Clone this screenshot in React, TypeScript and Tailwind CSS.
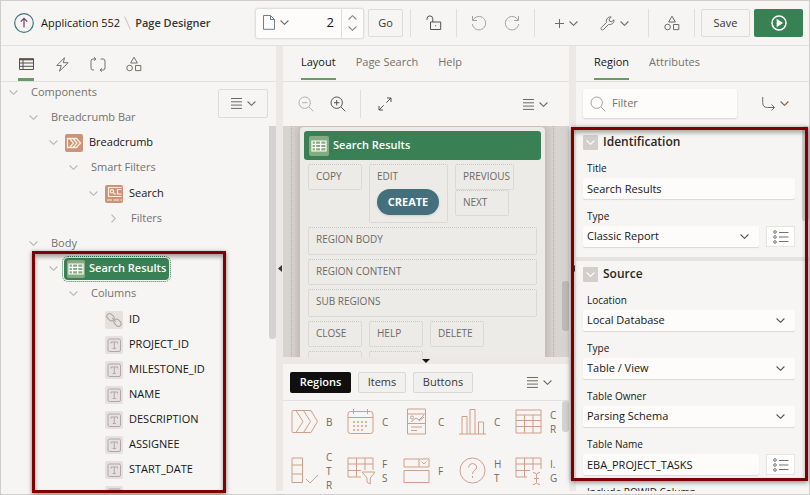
import { useState, type ReactNode } from "react";

type IconProps = { className?: string };

function Svg({
  className = "",
  box = "0 0 16 16",
  width = 1,
  children,
}: {
  className?: string;
  box?: string;
  width?: number;
  children: ReactNode;
}) {
  return (
    <svg
      className={`shrink-0 ${className}`}
      viewBox={box}
      fill="none"
      stroke="currentColor"
      strokeWidth={width}
      aria-hidden="true"
    >
      {children}
    </svg>
  );
}

const Chevron = ({ className = "" }: IconProps) => (
  <Svg className={`h-[5px] w-[9px] ${className}`} box="0 0 9 5" width={1.1}>
    <path d="M.6.5 4.5 4.3 8.4.5" />
  </Svg>
);

const Lines = () => (
  <Svg className="h-[11px] w-[11px]" box="0 0 11 11">
    <path d="M0 .5h11M0 3.8h11M0 7.1h11M0 10.4h11" />
  </Svg>
);

const Shapes = ({ className = "" }: IconProps) => (
  <Svg className={`h-4 w-4 ${className}`}>
    <path d="M8 1.2 11.4 7H4.6z" />
    <circle cx="3.6" cy="12" r="2.8" />
    <path d="M9.5 9.5h5.3v5.1H9.5z" />
  </Svg>
);

const Magnifier = ({ className = "", sign = "" }: IconProps & { sign?: string }) => (
  <Svg className={`h-4 w-4 ${className}`}>
    <circle cx="6.7" cy="6.7" r="5.7" />
    <path d="m11 11 4.3 4.3" />
    {sign && <path d={sign} />}
  </Svg>
);

const Grid = ({ className = "" }: IconProps) => (
  <Svg className={className} box="0 0 18 18" width={1.2}>
    <path d="M2 4h14v10H2zM2 7.3h14M2 10.6h14M5.5 4v10M10.7 4v10" />
  </Svg>
);

const ListIcon = () => (
  <Svg className="h-[14px] w-[16px]" box="0 0 16 14">
    <circle cx="2" cy="2" r="1.3" />
    <circle cx="2" cy="7" r="1.3" />
    <circle cx="2" cy="12" r="1.3" />
    <path d="M6 2.5h9.500M6 7h9.500M6 11.500h9.500" />
  </Svg>
);

function TreeIcon({ kind }: { kind: string }) {
  if (kind === "crumb")
    return (
      <span className="size-[18px] shrink-0 rounded-[2px] bg-[#cb9478] text-[#fbeedd]">
        <Svg box="0 0 18 18" width={1.3}>
          <path d="M2.500 4.500h9l4 4.500-4 4.500h-9zM4.500 4.500 8.500 9l-4 4.500M8 4.500 12 9l-4 4.500" />
        </Svg>
      </span>
    );
  if (kind === "search")
    return (
      <span className="size-[18px] shrink-0 rounded-[2px] bg-[#cb9478] text-[#fbeedd]">
        <Svg box="0 0 18 18" width={1.2}>
          <path d="M16.500 2.500h-13v9h13M2 15h5M8.500 15H14M15.500 15H17M16.500 4.500h-4v4.500h4M8.500 7.800l2 1.700" />
          <circle cx="7" cy="6.300" r="1.700" />
        </Svg>
      </span>
    );
  if (kind === "table")
    return (
      <span className="size-[18px] shrink-0 rounded-[2px] bg-[#85ab81] text-white">
        <Grid />
      </span>
    );
  if (kind === "link")
    return (
      <span className="size-[18px] shrink-0 rounded-[2px] bg-[#e4e1de] text-[#a9a5a2]">
        <Svg box="0 0 18 18">
          <rect x="1.500" y="3.500" width="8" height="5.400" rx="2.700" transform="rotate(45 5.500 6.200)" />
          <rect x="8.500" y="9" width="8" height="5.400" rx="2.700" transform="rotate(45 12.500 11.700)" />
          <path d="m7 7 4 4" />
        </Svg>
      </span>
    );
  return (
    <span className="size-[18px] shrink-0 rounded-[2px] bg-[#e4e1de] text-[#b3a5b0]">
      <Svg box="0 0 18 18">
        <rect x="3" y="3" width="12.500" height="12.500" rx="1.500" />
        <path d="M6 7.500v-1.500h6.500v1.500M9.250 6v6.500M7.700 12.500h3.200" />
      </Svg>
    </span>
  );
}

type Item = {
  label: string;
  icon?: string;
  state?: "open" | "closed";
  selected?: boolean;
  children?: Item[];
};

const column = (label: string): Item => ({ label, icon: "text" });

const tree: Item[] = [
  {
    label: "Components",
    state: "open",
    children: [
      {
        label: "Breadcrumb Bar",
        state: "open",
        children: [
          {
            label: "Breadcrumb",
            icon: "crumb",
            state: "open",
            children: [
              {
                label: "Smart Filters",
                state: "open",
                children: [
                  {
                    label: "Search",
                    icon: "search",
                    state: "open",
                    children: [{ label: "Filters", state: "closed" }],
                  },
                ],
              },
            ],
          },
        ],
      },
      {
        label: "Body",
        state: "open",
        children: [
          {
            label: "Search Results",
            icon: "table",
            state: "open",
            selected: true,
            children: [
              {
                label: "Columns",
                state: "open",
                children: [
                  { label: "ID", icon: "link" },
                  column("PROJECT_ID"),
                  column("MILESTONE_ID"),
                  column("NAME"),
                  column("DESCRIPTION"),
                  column("ASSIGNEE"),
                  column("START_DATE"),
                  column("END_DATE"),
                ],
              },
            ],
          },
        ],
      },
    ],
  },
];

function TreeList({ items, level = 0 }: { items: Item[]; level?: number }) {
  const indent = level === 0 ? "" : level === 4 ? "pl-5 pt-px" : "pl-5";
  return (
    <ul className={indent}>
      {items.map((item) => (
        <li key={item.label}>
          <div className="flex h-[25px] items-center whitespace-nowrap">
            <span className="flex w-6 shrink-0 justify-center pl-px text-[#b9b5b2]">
              {item.state && <Chevron className={item.state === "closed" ? "-rotate-90" : ""} />}
            </span>
            {item.selected ? (
              <span className="-ml-px flex h-[22px] items-center gap-1 rounded-[4px] bg-[#398055] px-[3px] font-semibold text-white outline-1 outline-offset-1 outline-[#398055] outline-dotted">
                <TreeIcon kind="table" />
                {item.label}
              </span>
            ) : item.icon ? (
              <span className="flex items-center gap-[6px] text-[#161513]">
                <TreeIcon kind={item.icon} />
                {item.label}
              </span>
            ) : (
              <span className="pl-[6px] text-[#75716d]">{item.label}</span>
            )}
          </div>
          {item.children && <TreeList items={item.children} level={level + 1} />}
        </li>
      ))}
    </ul>
  );
}

const Rule = () => <span className="h-7 w-px bg-[#e0dedb]" />;

function IconButton({
  label,
  className = "",
  children,
}: {
  label: string;
  className?: string;
  children: ReactNode;
}) {
  return (
    <button
      type="button"
      aria-label={label}
      className={`flex h-7 shrink-0 items-center justify-center gap-[5px] ${className}`}
    >
      {children}
    </button>
  );
}

function Header() {
  return (
    <header className="flex h-[45px] shrink-0 items-center border-b border-[#e3e1df] pr-[6px] pl-[13px]">
      <nav aria-label="Breadcrumb" className="flex flex-1 items-center whitespace-nowrap">
        <Svg className="size-5 text-[#3f7480]" box="0 0 20 20" width={1.2}>
          <circle cx="10" cy="10" r="9.300" />
          <path stroke="#7a3b74" d="M10 14.500v-9M6.800 8.600 10 5.400l3.200 3.200" />
        </Svg>
        <a href="#app" className="ml-[7px]">
          Application 552
        </a>
        <Svg className="mx-1 h-[14px] w-[7px] text-[#c5c2bf]" box="0 0 7 14">
          <path d="m.7.500 5.600 13" />
        </Svg>
        <span className="font-semibold text-[#3a3633]">Page Designer</span>
      </nav>
      <div className="flex h-[29px] w-[107px] items-stretch rounded-[2px] bg-[#fdfcfb] shadow-[0_0_2px_1px_rgba(0,0,0,0.12)]">
        <IconButton label="Select page" className="w-[40px] text-[#6d6966]">
          <Svg className="h-[15px] w-[12px] text-[#6f7f8c]" box="0 0 12 15">
            <path d="M.500.500h7l4 4v9.800h-11zM7.500.500v4h4" />
          </Svg>
          <Chevron />
        </IconButton>
        <input
          aria-label="Page number"
          defaultValue="2"
          className="w-0 min-w-0 flex-1 bg-transparent pr-[7px] text-right text-[13px] outline-none"
        />
        <div className="flex w-[22px] flex-col items-center justify-around border-l border-[#dedcd9] py-[3px] text-[#8c8884]">
          <button type="button" aria-label="Next page">
            <Chevron className="h-[4px] w-[7px] rotate-180" />
          </button>
          <button type="button" aria-label="Previous page">
            <Chevron className="h-[4px] w-[7px]" />
          </button>
        </div>
      </div>
      <button type="button" className="mr-[7px] ml-[5px] h-7 w-[35px] rounded-[2px] border border-[#dedcd9] text-[#3a3633]">
        Go
      </button>
      <Rule />
      <IconButton label="Unlocked" className="w-[45px] text-[#55514e]">
        <Svg className="h-4 w-4">
          <path d="M1 5V3.800a2.900 2.900 0 0 1 5.800 0V7M4.500 7h10.200v7.500H4.500z" />
          <path d="M9.100 10.700h1" />
        </Svg>
      </IconButton>
      <Rule />
      <div className="flex w-[77px] justify-center gap-[17px] text-[#a5a19e]">
        <IconButton label="Undo">
          <Svg className="h-4 w-4">
            <path d="M1.500 1v4.500H6M1.900 5.300A6.700 6.700 0 1 1 1.300 9" />
          </Svg>
        </IconButton>
        <IconButton label="Redo">
          <Svg className="h-4 w-4">
            <path d="M14.500 1v4.500H10M14.100 5.300A6.700 6.700 0 1 0 14.700 9" />
          </Svg>
        </IconButton>
      </div>
      <Rule />
      <div className="flex w-[113px] items-center justify-between pr-[19px] pl-5 text-[#6d6966]">
        <IconButton label="Create">
          <Svg className="size-[9px]" box="0 0 9 9">
            <path d="M4.500 0v9M0 4.500h9" />
          </Svg>
          <Chevron />
        </IconButton>
        <IconButton label="Utilities" className="gap-[3px]">
          <Svg className="size-[15px]">
            <path d="m1.300 12.500 5.600-5.600C6.200 3.300 8.500.600 12 1L9.700 3.300l.500 2.300 2.400.500L14.900 4c.4 3.300-2.200 5.600-5.800 5l-5.600 5.600c-1.500 1-3.200-.6-2.200-2.100z" />
          </Svg>
          <Chevron />
        </IconButton>
      </div>
      <Rule />
      <IconButton label="Shared Components" className="w-[45px] text-[#6d6966]">
        <Shapes />
      </IconButton>
      <Rule />
      <button type="button" className="mr-1 ml-[6px] h-7 w-[49px] rounded-[2px] border border-[#dedcd9] text-[#3a3633]">
        Save
      </button>
      <IconButton label="Save and run page" className="w-[49px] rounded-[2px] bg-[#398055] text-white">
        <Svg className="h-4 w-4" width={1.5}>
          <circle cx="8" cy="8" r="7" />
          <path fill="currentColor" stroke="none" d="M5.600 3.800 12 8l-6.400 4.200z" />
        </Svg>
      </IconButton>
    </header>
  );
}

function TextTabs({ tabs, label }: { tabs: string[]; label: string }) {
  const [active, setActive] = useState(tabs[0]);
  return (
    <div role="tablist" aria-label={label} className="flex h-9 shrink-0 gap-5 border-b border-[#e3e1df] px-[18px]">
      {tabs.map((tab) => (
        <button
          key={tab}
          type="button"
          role="tab"
          aria-selected={tab === active}
          onClick={() => setActive(tab)}
          className={`mb-px border-b-2 pt-px whitespace-nowrap ${
            tab === active ? "border-[#689b63] text-[#161513]" : "border-transparent text-[#75716d]"
          }`}
        >
          {tab}
        </button>
      ))}
    </div>
  );
}

function TreePane() {
  return (
    <section aria-label="Rendering" className="relative flex w-[275px] shrink-0 flex-col">
      <div role="tablist" aria-label="Trees" className="flex h-9 shrink-0 gap-5 border-b border-[#e3e1df] pl-[17px] text-[#75716d]">
        <button type="button" role="tab" aria-selected="true" aria-label="Rendering" className="flex w-4 justify-center border-b-3 border-[#689b63] pt-3">
          <Svg className="h-[13px] w-[15px] text-[#55514e]" box="0 0 15 13">
            <path d="M.500 1h14v10.500H.500zM4 2v9.500M4 5h10.500M4 8.300h10.500" />
            <path strokeWidth="2" d="M0 1.300h15" />
            <path d="M0 5h4M0 8.300h4" />
          </Svg>
        </button>
        <button type="button" role="tab" aria-selected="false" aria-label="Dynamic Actions" className="flex w-4 justify-center pt-[11px]">
          <Svg className="h-[15px] w-[13px]" box="0 0 13 15">
            <path d="M8.500.700.800 8.500h4.500L3.500 14.200l8.700-8.500H7.300z" />
          </Svg>
        </button>
        <button type="button" role="tab" aria-selected="false" aria-label="Processing" className="flex w-4 justify-center pt-[11px]">
          <Svg className="h-[15px] w-4" box="0 0 16 15">
            <path d="M5.500 2H3Q1 2 1 4v7q0 2 2 2h1M4 .300 6 2 4 3.700M10.500 13H13q2 0 2-2V4q0-2-2-2h-2.500M12 11.300 10 13l2 1.700" />
          </Svg>
        </button>
        <button type="button" role="tab" aria-selected="false" aria-label="Page Shared Components" className="flex w-4 justify-center pt-[10px]">
          <Shapes />
        </button>
      </div>
      <div className="min-h-0 flex-1 overflow-hidden">
        <div className="-mt-[2px]">
          <TreeList items={tree} />
        </div>
      </div>
      <IconButton
        label="Tree menu"
        className="absolute top-[43px] right-2 h-[29px] w-[50px] rounded-[2px] border border-[#dedcd9] bg-[#f6f5f3] text-[#6d6966]"
      >
        <Lines />
        <Chevron />
      </IconButton>
      <span className="absolute top-[80px] right-0 h-[213px] w-[7px] rounded-b-[3px] bg-[#d4d2d0]" />
      <span className="pointer-events-none absolute top-[205px] -bottom-[2px] left-[31px] w-[194px] border-3 border-[#7f0000] shadow-[0_1px_4px_rgba(0,0,0,0.5),inset_0_3px_4px_rgba(0,0,0,0.35)]" />
    </section>
  );
}

function Splitter() {
  return (
    <div className="flex w-[7px] shrink-0 items-center justify-center bg-[#ece8e5]">
      <Svg className="h-[7px] w-[4px] text-[#3a3633]" box="0 0 4 7">
        <path fill="currentColor" stroke="none" d="M4 0v7L0 3.500z" />
      </Svg>
    </div>
  );
}

function Slot({ label, className = "" }: { label: string; className?: string }) {
  return (
    <div
      className={`rounded-[2px] border border-dotted border-[#cac7c4] pt-1 pl-[7px] text-[10px] leading-[14px] whitespace-nowrap text-[#6d6966] ${className}`}
    >
      {label}
    </div>
  );
}

function LayoutCanvas() {
  return (
    <div className="relative h-[231px] shrink-0 overflow-hidden bg-[#d7d3cf] pr-[15px] pl-2">
      <div className="h-full border-x border-dotted border-[#b9b4b0] px-2 pt-px">
        <div className="h-[260px] rounded-t-[4px] bg-[#ecebe7] px-1 pt-1 shadow-[0_0_10px_2px_rgba(90,60,60,0.22)]">
          <h2 className="flex h-[29px] items-center gap-1 rounded-[3px] bg-[#398055] pl-[5px] font-semibold text-white">
            <span className="size-5 rounded-[2px] bg-[#85ab81] p-px">
              <Grid className="size-[18px]" />
            </span>
            Search Results
          </h2>
          <div className="flex flex-col gap-1 px-1 pt-1">
            <div className="flex items-start gap-[7px]">
              <Slot label="COPY" className="h-[26px] w-[54px]" />
              <div className="h-[59px] w-[79px] rounded-[2px] border border-dotted border-[#cac7c4] px-[7px] pt-1">
                <div className="text-[10px] leading-[14px] text-[#6d6966]">EDIT</div>
                <button type="button" className="mt-[6px] h-[26px] w-[62px] rounded-full bg-[#43707c] font-bold text-white shadow-sm">
                  CREATE
                </button>
              </div>
              <div>
                <Slot label="PREVIOUS" className="h-[26px] w-[59px]" />
                <Slot label="NEXT" className="h-[26px] w-[54px]" />
              </div>
            </div>
            <Slot label="REGION BODY" className="h-7" />
            <Slot label="REGION CONTENT" className="h-[26px]" />
            <Slot label="SUB REGIONS" className="h-7" />
            <div className="grid grid-cols-[54px_54px_54px] gap-x-[7px] gap-y-1">
              <Slot label="CLOSE" className="h-[26px]" />
              <Slot label="HELP" className="h-[26px]" />
              <Slot label="DELETE" className="h-[26px]" />
              <Slot label="" className="h-[26px]" />
              <Slot label="" className="h-[26px]" />
            </div>
          </div>
        </div>
      </div>
      <span className="absolute top-[155px] right-0 h-[50px] w-[7px] rounded-[3px] bg-[#bdb9b6]" />
    </div>
  );
}

const gallery: { label: string[]; art: ReactNode }[] = [
  {
    label: ["B"],
    art: <path d="M2 2.500h18l6.500 11-6.500 11H2q-1 0-1-1v-20q0-1 1-1zM5 2.500l7 11-7 11M12.500 2.500l7 11-7 11" />,
  },
  {
    label: ["C"],
    art: (
      <>
        <rect x="1" y="3.500" width="25" height="22" rx="2.500" />
        <path d="M1 9.500h25M6.500 1v5M20.500 1v5" />
        <path strokeDasharray="2 2" strokeWidth="1.600" d="M6 14h16M6 18h16M6 22h12" />
      </>
    ),
  },
  {
    label: ["C"],
    art: (
      <>
        <path d="M4.500 1h18v25h-18zM4.500 6h18M4.500 15.500h18M8 19h11M8 22.500h6M8 14l5-4 3 2 5-5M16 13l5-4" />
        <circle cx="9" cy="9.500" r="1.500" />
      </>
    ),
  },
  { label: ["C"], art: <path d="M0 26h27M3 26V8.500h5V26M11 26V1.500h5V26M19.500 26V14h5v12" /> },
  {
    label: ["C", "R"],
    art: <path d="M1 2h25v23H1zM1 7h25M1 12.500h25M1 18.500h25M9.500 7v18M18 7v18" />,
  },
  { label: ["C", "T", "R"], art: <path d="M1 1h10.500v24.500H1zM1 8h10.500M1 17h10.500M15 22l4 4 8-8" /> },
  {
    label: ["F", "S"],
    art: <path d="M14 20H1V1h25v12M1 7h25M1 13.500h13M9.500 1v19M18 1v12M15 15h13l-4.700 6v6l-3.300-1.800V21z" />,
  },
  {
    label: ["F"],
    art: <path d="M1 2h25v8H1zM16 2v8M18.500 4.500 21 7l2.500-2.500M1 13.500h25v12H1z" />,
  },
  {
    label: ["H", "T"],
    art: (
      <>
        <circle cx="13.500" cy="13.500" r="12.500" />
        <path d="M9.500 10.500q.3-4 4-4t4.200 3.500c0 3.500-4.200 3-4.200 7M13.500 19v2" />
      </>
    ),
  },
  {
    label: ["I.", "G"],
    art: <path d="M12 20H1V1h25v11M1 7h25M1 13.500h14M9.500 1v19M18 1v12M18 15.500q3 0 3.500 2v8q-.5 2-3.500 2M25 15.500q-3 0-3.500 2v8q.5 2 3.500 2M19 21.500h5" />,
  },
];

function CenterPane() {
  const [kind, setKind] = useState("Regions");
  return (
    <section aria-label="Page layout" className="flex min-w-0 flex-1 flex-col">
      <TextTabs label="Central pane" tabs={["Layout", "Page Search", "Help"]} />
      <div className="flex h-11 shrink-0 items-center pr-[21px] pl-[15px] text-[#55514e]">
        <IconButton label="Zoom out" className="text-[#b3afac]">
          <Magnifier sign="M4 6.700h5.400" />
        </IconButton>
        <IconButton label="Zoom in" className="ml-4">
          <Magnifier sign="M4 6.700h5.400M6.700 4v5.400" />
        </IconButton>
        <span className="mr-[17px] ml-[14px] h-7 w-px bg-[#e0dedb]" />
        <IconButton label="Expand">
          <Svg className="size-[14px]" box="0 0 14 14">
            <path d="M8.300 5.700 13 1M9 1h4v4M5.700 8.300 1 13M1 9v4h4" />
          </Svg>
        </IconButton>
        <IconButton label="Layout menu" className="ml-auto text-[#6d6966]">
          <Lines />
          <Chevron />
        </IconButton>
      </div>
      <LayoutCanvas />
      <div className="flex h-[7px] shrink-0 items-center justify-center bg-[#ece8e5]">
        <Svg className="h-[4px] w-[8px] text-[#161513]" box="0 0 8 4">
          <path fill="currentColor" stroke="none" d="M0 0h8L4 4z" />
        </Svg>
      </div>
      <div className="flex h-[37px] shrink-0 items-center gap-[7px] border-b border-[#e3e1df] pr-[17px] pl-[7px]">
        <button
          type="button"
          aria-pressed={kind === "Regions"}
          onClick={() => setKind("Regions")}
          className="h-[21px] w-[61px] rounded-[2px] bg-[#100f0e] font-semibold text-white"
        >
          Regions
        </button>
        <button
          type="button"
          aria-pressed={kind === "Items"}
          onClick={() => setKind("Items")}
          className="h-[21px] w-12 rounded-[2px] border border-[#dad7d4] bg-[#f1f0ee] text-[#3a3633]"
        >
          Items
        </button>
        <button
          type="button"
          aria-pressed={kind === "Buttons"}
          onClick={() => setKind("Buttons")}
          className="h-[21px] w-[60px] rounded-[2px] border border-[#dad7d4] bg-[#f1f0ee] text-[#3a3633]"
        >
          Buttons
        </button>
        <IconButton label="Gallery menu" className="ml-auto text-[#6d6966]">
          <Lines />
          <Chevron />
        </IconButton>
      </div>
      <div className="flex min-h-0 flex-1 overflow-hidden">
        <ul className="grid flex-1 auto-rows-[42px] grid-cols-[repeat(4,56px)_1fr] content-start gap-y-[7px] pl-2">
          {gallery.map((entry, i) => (
            <li key={i} className="flex items-center gap-[7px] text-[10px] leading-[14px] text-[#6d6966]">
              <Svg className="size-7 text-[#d09f8b]" box="0 0 28 28">
                {entry.art}
              </Svg>
              <span>
                {entry.label.map((part) => (
                  <span key={part} className="block">
                    {part}
                  </span>
                ))}
              </span>
            </li>
          ))}
        </ul>
        <span className="h-[31px] w-[7px] rounded-[3px] bg-[#d4d2d0]" />
      </div>
    </section>
  );
}

const field =
  "block h-[21px] w-full min-w-0 rounded-[2px] bg-[#fdfcfb] px-1 text-[#161513] shadow-[0_1px_1px_rgba(0,0,0,0.12)]";

function Field({
  id,
  label,
  value,
  select,
  picker,
}: {
  id: string;
  label: string;
  value: string;
  select?: boolean;
  picker?: boolean;
}) {
  return (
    <div>
      <label htmlFor={id} className="block h-5 pl-1 text-[10px] leading-5 text-[#161513]">
        {label}
      </label>
      <div className="flex gap-[7px]">
        <div className="relative min-w-0 flex-1">
          {select ? (
            <>
              <select id={id} className={`appearance-none ${field}`}>
                <option>{value}</option>
              </select>
              <Chevron className="pointer-events-none absolute top-2 right-[10px] text-[#55514e]" />
            </>
          ) : (
            <input id={id} defaultValue={value} className={`outline-none ${field}`} />
          )}
        </div>
        {picker && (
          <button
            type="button"
            aria-label={`Pick ${label}`}
            className="flex h-[21px] w-[29px] items-center justify-center border border-[#e6e4e2] bg-white text-[#75716d]"
          >
            <ListIcon />
          </button>
        )}
      </div>
    </div>
  );
}

function Group({ title, children }: { title: string; children: ReactNode }) {
  return (
    <section className="pr-[14px] pl-[7px]">
      <h2>
        <button type="button" className="flex h-[26px] items-center gap-[5px] text-[12px] font-semibold text-[#2a2725]">
          <span className="flex size-[15px] items-center justify-center rounded-[1px] bg-[#d2cec9] text-white">
            <Chevron />
          </span>
          {title}
        </button>
      </h2>
      <div className="flex flex-col gap-[7px] pt-[3px]">{children}</div>
    </section>
  );
}

function PropertyPane() {
  return (
    <section aria-label="Property editor" className="relative flex w-[233px] shrink-0 flex-col">
      <TextTabs label="Properties" tabs={["Region", "Attributes"]} />
      <div className="flex h-[47px] shrink-0 items-center pt-px pr-5 pb-[5px] pl-[7px]">
        <label className="flex h-[29px] min-w-0 flex-1 items-center gap-[6px] rounded-[2px] bg-[#fdfcfb] pl-[7px] text-[#a5a19e] shadow-[0_1px_2px_rgba(0,0,0,0.14)]">
          <Magnifier />
          <input
            aria-label="Filter"
            placeholder="Filter"
            className="min-w-0 flex-1 bg-transparent outline-none placeholder:text-[#75716d]"
          />
        </label>
        <IconButton label="Go to group" className="ml-[25px] text-[#6d6966]">
          <Svg className="h-[14px] w-[13px]" box="0 0 13 14">
            <path d="M.700 0v5.500Q.700 10.500 5.500 10.500h7M9.500 7.500l3 3-3 3" />
          </Svg>
          <Chevron className="text-[#8a5a3c]" />
        </IconButton>
      </div>
      <div className="min-h-0 flex-1 overflow-hidden">
        <Group title="Identification">
          <Field id="title" label="Title" value="Search Results" />
          <Field id="region-type" label="Type" value="Classic Report" select picker />
        </Group>
        <hr className="mt-[10px] h-[4px] border-0 bg-[#e5e3e1]" />
        <Group title="Source">
          <Field id="location" label="Location" value="Local Database" select />
          <Field id="source-type" label="Type" value="Table / View" select />
          <Field id="owner" label="Table Owner" value="Parsing Schema" select />
          <Field id="table" label="Table Name" value="EBA_PROJECT_TASKS" picker />
          <Field id="rowid" label="Include ROWID Column" value="No" />
        </Group>
      </div>
      <span className="absolute top-[80px] right-0 h-[95px] w-[7px] rounded-[3px] bg-[#d4d2d0]" />
      <span className="pointer-events-none absolute top-[81px] right-px bottom-[10px] -left-[5px] border-3 border-[#7f0000] shadow-[0_1px_5px_rgba(0,0,0,0.5),inset_0_3px_4px_rgba(0,0,0,0.3)]" />
    </section>
  );
}

export default function App() {
  return (
    <div className="flex h-screen flex-col border border-[#cfcecd] bg-[#f6f5f3] pb-[3px] font-['Open_Sans','Noto_Sans',sans-serif] text-[11px] text-[#161513]">
      <Header />
      <main className="flex min-h-0 flex-1">
        <TreePane />
        <Splitter />
        <CenterPane />
        <Splitter />
        <PropertyPane />
      </main>
    </div>
  );
}
